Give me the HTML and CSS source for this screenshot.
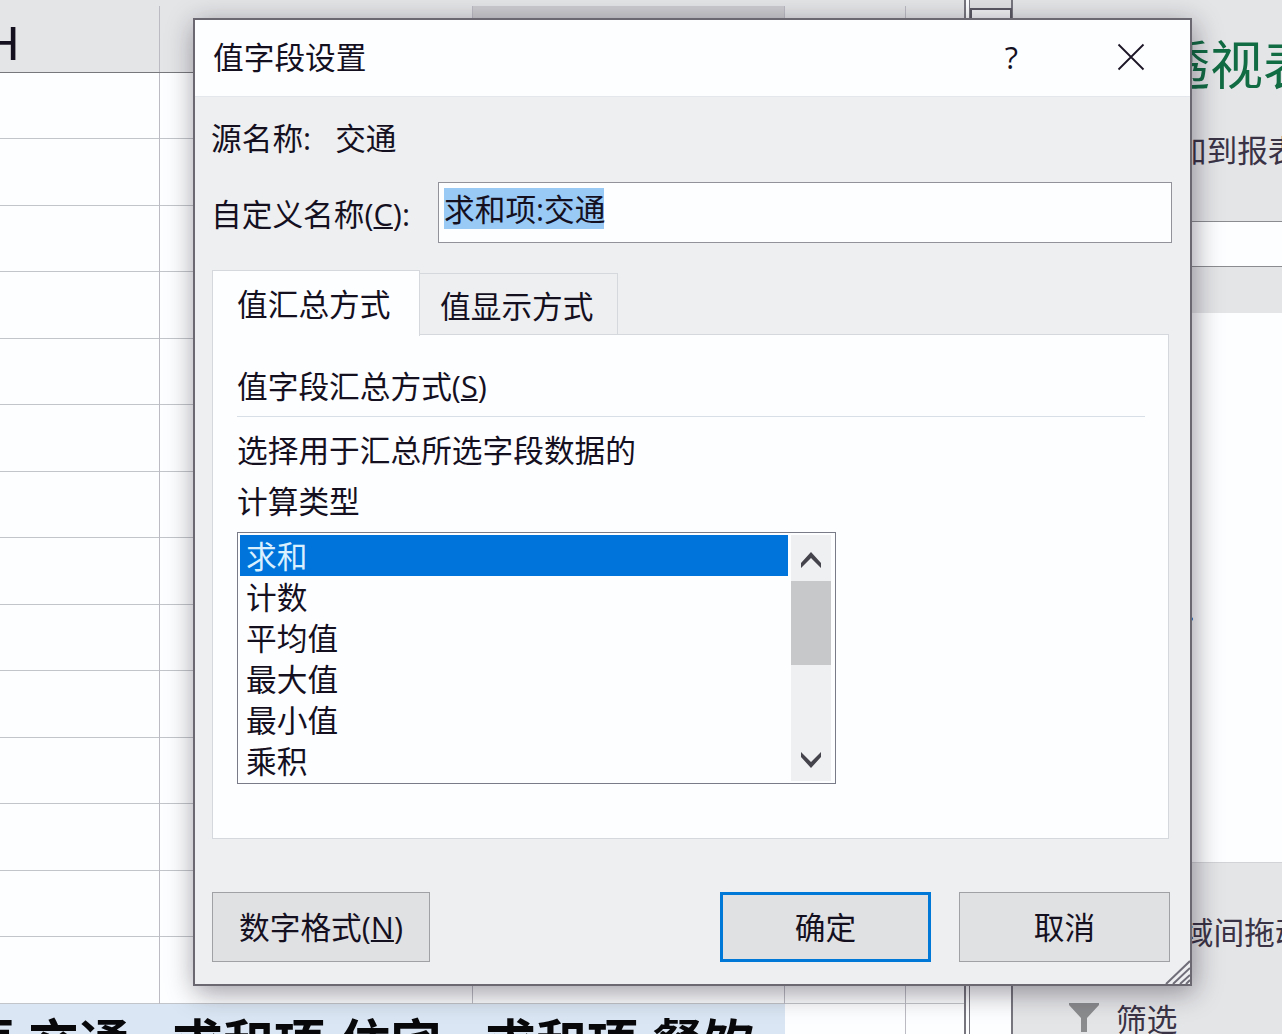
FILE: index.html
```html
<!DOCTYPE html>
<html lang="zh-CN">
<head>
  <meta charset="UTF-8">
  <meta name="viewport" content="width=device-width, initial-scale=1.0">
  <title>值字段设置</title>
  <link rel="stylesheet" href="styles.css">
</head>
<body>
  <div class="workspace">
    <div class="sheet">
      <div class="sheet-header">
        <div class="col col-h"><span>H</span></div>
        <div class="col col-i"></div>
        <div class="col col-j active"></div>
        <div class="col col-k"></div>
      </div>
      <div class="sheet-body">
        <div class="col col-h"></div>
        <div class="col col-i"></div>
        <div class="col col-j"></div>
        <div class="col col-k"></div>
      </div>
      <div class="sheet-body pivot-row">
        <div class="col col-h"><span>求和项:交通</span></div>
        <div class="col col-i"><span>求和项:住宅</span></div>
        <div class="col col-j"><span>求和项:餐饮</span></div>
        <div class="col col-k"></div>
      </div>
    </div>
    <div class="scroll-track"><div class="scroll-button"></div></div>
    <div class="pane">
      <div class="pane-top">
        <h1>数据透视表字段</h1>
        <p>选择要添加到报表的字段:</p>
      </div>
      <div class="pane-search"></div>
      <div class="pane-gap"></div>
      <div class="pane-fields"><span>更多表格...</span></div>
      <div class="pane-areas">
        <p>在以下区域间拖动字段:</p>
        <div class="filter">
          <svg width="30" height="30" viewBox="0 0 30 30"><path d="M0 0H30V2L18 15V29H12V15L0 2Z" fill="#8b8c8e"/></svg>
          <span>筛选</span>
        </div>
      </div>
    </div>
  </div>

  <div class="dialog">
    <div class="title-bar">
      <span class="title">值字段设置</span>
      <span class="help">?</span>
      <svg class="close" width="28" height="28" viewBox="0 0 28 28"><path d="M1.5 1.5L26.5 26.5M26.5 1.5L1.5 26.5" stroke="#1b1526" stroke-width="1.8"/></svg>
    </div>
    <div class="dialog-body">
      <div class="source"><span>源名称:</span><span>交通</span></div>
      <div class="custom-name">
        <label>自定义名称(<u>C</u>):</label>
        <div class="name-input"><span class="selected-text">求和项:交通</span></div>
      </div>
      <div class="tabs">
        <div class="tab active">值汇总方式</div>
        <div class="tab">值显示方式</div>
      </div>
      <div class="tab-panel">
        <div class="group-title">值字段汇总方式(<u>S</u>)</div>
        <p>选择用于汇总所选字段数据的<br>计算类型</p>
        <div class="list-box">
          <ul>
            <li class="selected">求和</li>
            <li>计数</li>
            <li>平均值</li>
            <li>最大值</li>
            <li>最小值</li>
            <li>乘积</li>
          </ul>
          <div class="list-scroll">
            <svg width="20" height="16" viewBox="0 0 20 16"><path d="M0 11L10 0L20 11V16L10 6L0 16Z" fill="#45434b"/></svg>
            <div class="thumb"></div>
            <svg width="20" height="16" viewBox="0 0 20 16"><path d="M0 0L10 10L20 0V5L10 16L0 5Z" fill="#45434b"/></svg>
          </div>
        </div>
      </div>
      <div class="buttons">
        <button class="format">数字格式(<u>N</u>)</button>
        <button class="ok">确定</button>
        <button>取消</button>
      </div>
    </div>
    <svg class="grip" width="25" height="24" viewBox="0 0 25 24"><path d="M1 24L25 1M8 24L25 8M15 24L25 15M21 24L25 20" stroke="#706e78" stroke-width="2"/></svg>
  </div>
</body>
</html>
```

FILE: styles.css
```css
* {
  box-sizing: border-box;
}
body {
  margin: 0;
  width: 1282px;
  height: 1034px;
  overflow: hidden;
  position: relative;
  font-family: "Open Sans", "Noto Sans CJK SC", sans-serif;
  font-size: 30.7px;
  font-weight: 400;
  line-height: 42px;
  color: #15101f;
  background-color: #fdfeff;
  white-space: nowrap;
}
h1, p, ul {
  margin: 0;
  padding: 0;
  font-weight: inherit;
}
u {
  text-decoration-thickness: 2px;
  text-underline-offset: 1px;
  text-decoration-skip-ink: none;
}

/* Spreadsheet behind the dialog */
.workspace {
  display: flex;
  height: 1034px;
}
.sheet {
  flex: none;
  width: 966px;
  border-right: 2px solid #77757e;
  overflow: hidden;
}
.sheet-header,
.sheet-body {
  display: flex;
}
.sheet-header {
  height: 73px;
  padding-top: 6px;
  background-color: #e4e5e7;
  border-bottom: 1px solid #77787c;
}
.col {
  flex: none;
  border-right: 1px solid #bcbbc3;
}
.col-h {
  width: 160px;
}
.col-i {
  width: 313px;
}
.col-j {
  width: 312px;
}
.col-k {
  width: 121px;
}
.sheet-header .active {
  background-color: #cdcdd0;
}
.sheet-header span {
  display: block;
  margin: 7px 0 0 -16px;
  font-family: "Liberation Sans", sans-serif;
  font-size: 49px;
  line-height: 60px;
}
.sheet-body {
  height: 931px;
  background-image: repeating-linear-gradient(transparent 0, transparent 65.5px, #c2c5c9 65.5px, #c2c5c9 66.5px);
}
.pivot-row {
  height: 30px;
  background: none;
}
.pivot-row .col {
  border: none;
  background-color: #dae6f3;
}
.pivot-row .col-k {
  background-color: #fdfeff;
  border-right: 1px solid #bcbbc3;
}
.pivot-row span {
  display: block;
  height: 30px;
  margin-left: 12px;
  padding-top: 8px;
  overflow: hidden;
  font-size: 51px;
  font-weight: 700;
  line-height: 60px;
  color: #08080b;
}
.pivot-row .col-h span {
  margin-left: 0;
  display: flex;
  justify-content: flex-end;
  padding-right: 30px;
}
.scroll-track {
  flex: none;
  width: 44px;
  padding-top: 8px;
  margin-left: 3px;
  border: solid #77757e;
  border-width: 0 2px 0 1px;
  background: linear-gradient(#e0e0e2 20px, #fdfeff 20px);
}
.scroll-button {
  width: 42px;
  height: 40px;
  border: 2px solid #5a5863;
  background-color: #f1f1f3;
}

/* Field list pane */
.pane {
  flex: 1;
  min-width: 0;
  overflow: hidden;
  background-color: #e4e5e7;
}
.pane-top {
  height: 221px;
  padding: 30px 0 0 38px;
}
.pane-top h1 {
  font-size: 53px;
  line-height: 70px;
  color: #116b43;
}
.pane-top p {
  margin: 29px 0 0 2px;
  color: #3a3346;
}
.pane-search {
  height: 46px;
  background-color: #fdfeff;
  border: solid #8b8c90;
  border-width: 1px 0;
}
.pane-gap {
  height: 46px;
}
.pane-fields {
  height: 549px;
  padding: 275px 0 0 35px;
  background-color: #fdfeff;
}
.pane-areas {
  height: 172px;
  padding: 48px 0 0 47px;
  border-top: 1px solid #d2d3d6;
  color: #3a3346;
}
.filter {
  display: flex;
  gap: 17px;
  margin: 45px 0 0 9px;
}
.filter svg {
  margin-top: 5px;
}

/* Dialog window */
.dialog {
  position: absolute;
  left: 193px;
  top: 18px;
  width: 999px;
  height: 968px;
  border: 2px solid #6b6872;
  background-color: #eeeff1;
  box-shadow: 2px 6px 26px rgba(20, 15, 30, 0.42);
}
.title-bar {
  display: flex;
  align-items: center;
  height: 77px;
  padding: 0 45px 2px 18px;
  background-color: #fdfeff;
  border-bottom: 1px solid #e4e8ec;
}
.title {
  flex: 1;
}
.help {
  margin-right: 99px;
}
.dialog-body {
  padding: 20px 18px 0 17px;
}
.source {
  display: flex;
  gap: 24px;
  height: 65px;
  margin-left: -1px;
}
.custom-name {
  display: flex;
  justify-content: space-between;
  height: 88px;
  margin-left: -1px;
}
.custom-name label {
  padding-top: 11px;
}
.name-input {
  width: 734px;
  height: 61px;
  padding: 5px;
  border: 1px solid #92939a;
  background-color: #fdfeff;
}
.selected-text {
  display: block;
  width: 160px;
  height: 41px;
  line-height: 42px;
  background-color: #99c9f5;
}
.tabs {
  display: flex;
  align-items: flex-end;
  height: 65px;
}
.tab {
  width: 198px;
  height: 62px;
  padding: 11px 0 0 20px;
  border: 1px solid #d5d8dc;
  border-left: none;
}
.tab.active {
  width: 208px;
  height: 66px;
  padding: 12px 0 0 24px;
  border-left: 1px solid #d5d8dc;
  border-bottom: none;
  background-color: #fdfeff;
  margin-bottom: -1px;
  z-index: 1;
}
.tab-panel {
  width: 957px;
  height: 505px;
  margin-top: -1px;
  padding: 30px 23px 0 24px;
  border: 1px solid #d5d8dc;
  background-color: #fdfeff;
}
.group-title {
  height: 52px;
  border-bottom: 1px solid #d9dfe6;
}
.tab-panel p {
  padding-top: 8px;
  line-height: 51px;
}
.list-box {
  display: flex;
  justify-content: space-between;
  width: 599px;
  height: 252px;
  margin-top: 5px;
  border: 1px solid #797b89;
  padding: 2px 4px 2px 2px;
}
.list-box ul {
  width: 548px;
  list-style: none;
}
.list-box li {
  height: 41px;
  padding-left: 6px;
  line-height: 43px;
}
.list-box .selected {
  background-color: #0074db;
  color: #d9f0ff;
}
.list-scroll {
  display: flex;
  flex-direction: column;
  align-items: center;
  width: 40px;
  padding: 17px 0 13px;
  background-color: #eff0f2;
}
.thumb {
  width: 40px;
  height: 84px;
  margin: 13px 0 auto;
  background-color: #c7c8ca;
}
.buttons {
  display: flex;
  gap: 28px;
  margin: 53px 2px 0 0;
}
button {
  width: 211px;
  height: 70px;
  padding: 0;
  border: 1px solid #a0a1a5;
  background-color: #e0e1e3;
  font: inherit;
  color: inherit;
}
.format {
  width: 218px;
  margin-right: auto;
}
.ok {
  border: 3px solid #0078d7;
}
.grip {
  position: absolute;
  right: 0;
  bottom: 0;
}
```
